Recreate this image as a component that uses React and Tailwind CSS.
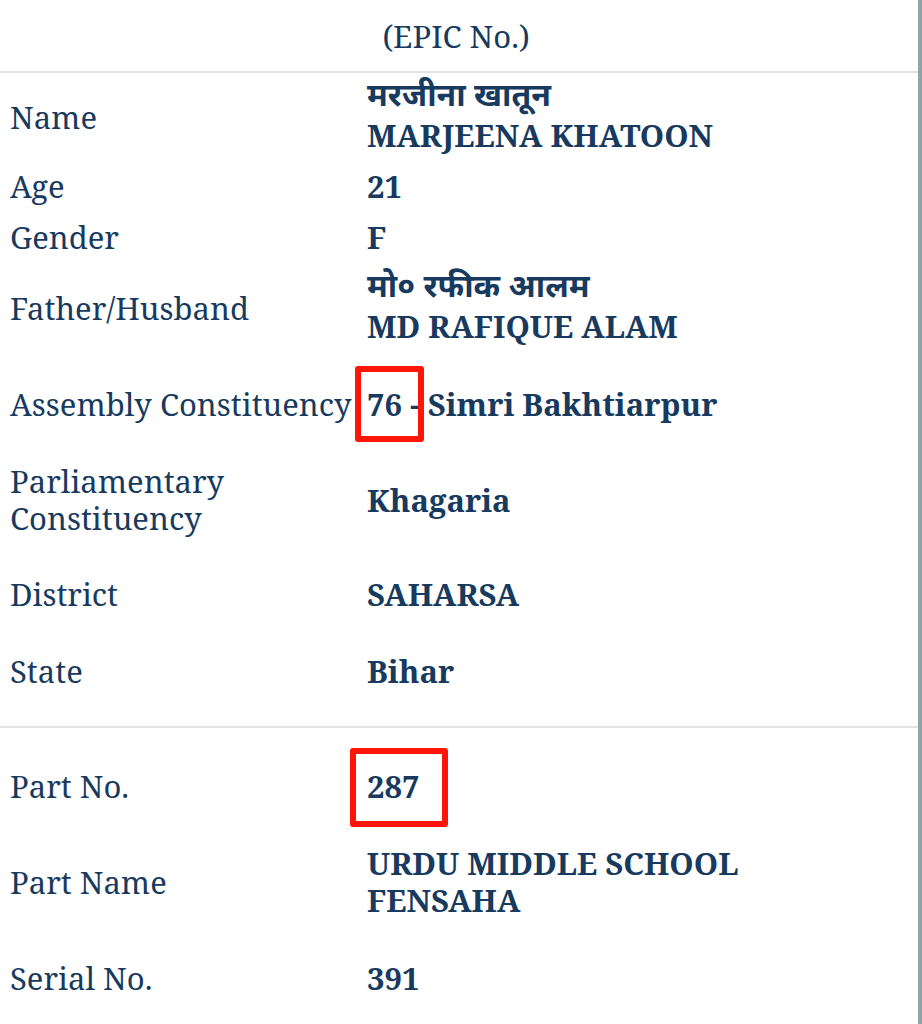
import React from 'react';

const serif = "font-['Noto_Serif','DejaVu_Serif','Liberation_Serif',serif]";
const hindi = "font-['Noto_Sans_Devanagari','Noto_Sans','Lohit_Devanagari','DejaVu_Sans',sans-serif]";

function Row({ label, value, gap }) {
  return (
    <div className={`grid grid-cols-[357px_1fr] items-center ${gap}`}>
      <div className="font-normal whitespace-nowrap">{label}</div>
      <div className="font-bold whitespace-nowrap">{value}</div>
    </div>
  );
}

export default function App() {
  return (
    <div className={`relative w-[922px] h-[1024px] overflow-hidden bg-white ${serif} text-[#173a5e] text-[31px] leading-[37px]`}>
      <div className="h-full border-r-4 border-[#8fa3ab]">
        <div className="pt-[18px] pb-[16px] text-center pr-[6px]">(EPIC No.)</div>
        <div className="h-[2px] bg-[#e2e2e2]" />

        <div className="pl-[10px]">
          <Row
            gap="mt-[7px]"
            label="Name"
            value={
              <>
                <div className={`${hindi} text-[32px]`}>मरजीना खातून</div>
                <div>MARJEENA KHATOON</div>
              </>
            }
          />
          <Row gap="mt-[14px]" label="Age" value="21" />
          <Row gap="mt-[14px]" label="Gender" value="F" />
          <Row
            gap="mt-[15px]"
            label="Father/Husband"
            value={
              <>
                <div className={`${hindi} text-[32px]`}>मो० रफीक आलम</div>
                <div>MD RAFIQUE ALAM</div>
              </>
            }
          />
          <Row gap="mt-[41px]" label="Assembly Constituency" value="76 - Simri Bakhtiarpur" />
          <Row
            gap="mt-[40px]"
            label={
              <>
                <div>Parliamentary</div>
                <div>Constituency</div>
              </>
            }
            value="Khagaria"
          />
          <Row gap="mt-[39px]" label="District" value="SAHARSA" />
          <Row gap="mt-[40px]" label="State" value="Bihar" />
        </div>

        <div className="mt-[36px] h-[2px] bg-[#e2e2e2]" />

        <div className="pl-[10px]">
          <Row gap="mt-[40px]" label="Part No." value="287" />
          <Row
            gap="mt-[40px]"
            label="Part Name"
            value={
              <>
                <div>URDU MIDDLE SCHOOL</div>
                <div>FENSAHA</div>
              </>
            }
          />
          <Row gap="mt-[41px]" label="Serial No." value="391" />
        </div>
      </div>

      {/* annotation boxes */}
      <div className="absolute left-[355px] top-[366px] w-[69px] h-[76px] border-[6px] border-[#ff1408] rounded-[3px]" />
      <div className="absolute left-[350px] top-[748px] w-[98px] h-[79px] border-[6px] border-[#ff1408] rounded-[3px]" />
    </div>
  );
}
